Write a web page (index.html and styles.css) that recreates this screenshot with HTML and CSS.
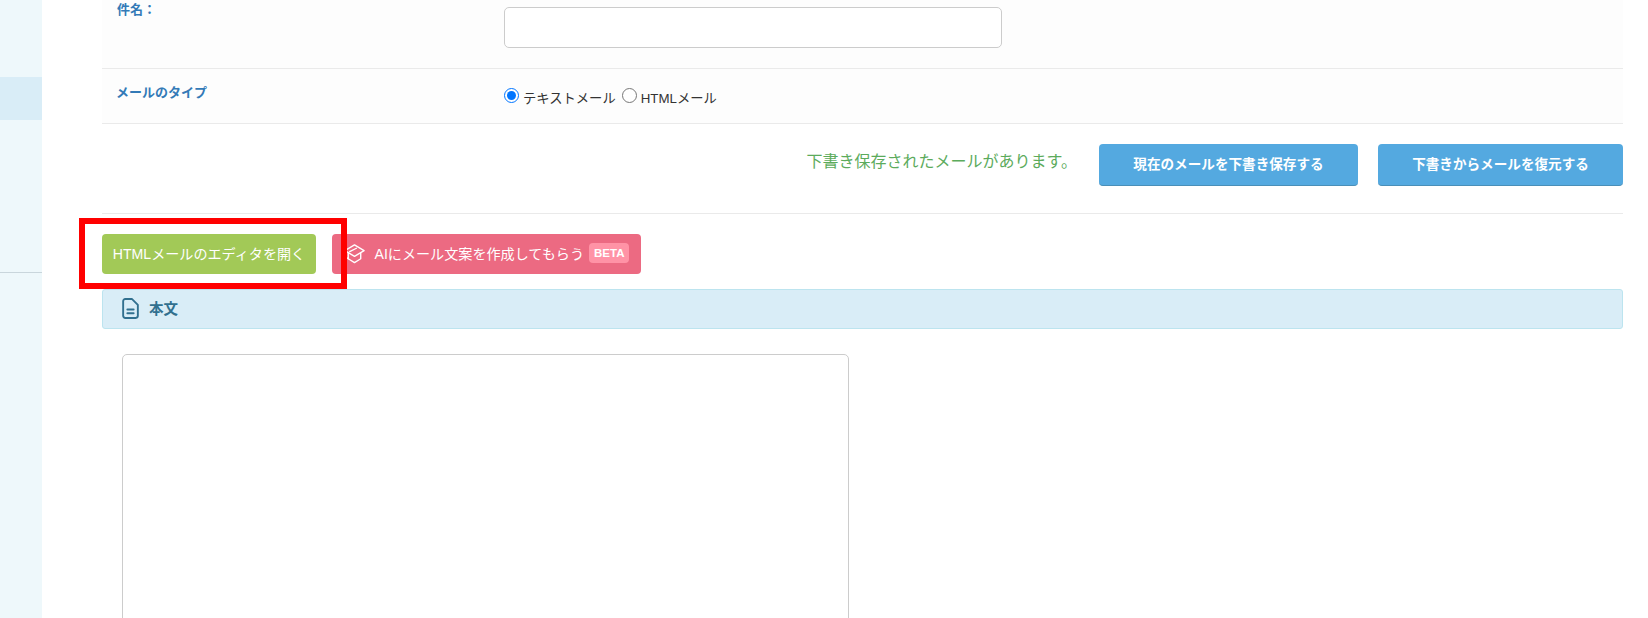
FILE: index.html
```html
<!DOCTYPE html>
<html lang="ja">
<head>
<meta charset="utf-8">
<title>メール作成</title>
<link rel="stylesheet" href="styles.css">
</head>
<body>
<div class="app">
  <aside class="sidebar">
    <div class="side-top"></div>
    <div class="side-active"></div>
    <div class="side-mid"></div>
  </aside>
  <main class="main">
    <div class="row row-subject">
      <div class="label">件名：</div>
      <div class="field"><input class="text-input" type="text"></div>
    </div>
    <div class="row row-type">
      <div class="label">メールのタイプ</div>
      <div class="field radios">
        <label class="radio"><input type="radio" name="t" checked><span class="radio-text">テキストメール</span></label>
        <label class="radio"><input type="radio" name="t"><span class="radio-text">HTMLメール</span></label>
      </div>
    </div>
    <div class="draft-bar">
      <span class="draft-note">下書き保存されたメールがあります。</span>
      <button class="btn-blue btn-save">現在のメールを下書き保存する</button>
      <button class="btn-blue btn-restore">下書きからメールを復元する</button>
    </div>
    <div class="tools">
      <div class="highlight"></div>
      <button class="btn btn-green">HTMLメールのエディタを開く</button>
      <button class="btn btn-pink">
        <svg class="cap" viewBox="0 0 24 24" fill="none" stroke="currentColor" stroke-width="1.4" stroke-linejoin="round" stroke-linecap="round">
          <path d="M12 3 22 9 12 15 2 9Z"/>
          <path d="M5.5 11.5V17.5L12 21.5 18.5 17.5V11.5"/>
          <path d="M2 9V15L5.5 17.5"/>
          <path d="M7 10 14 6.5"/>
        </svg>
        <span>AIにメール文案を作成してもらう</span>
        <span class="beta">BETA</span>
      </button>
    </div>
    <div class="section-head">
      <svg class="doc" viewBox="0 0 16 20" fill="none" stroke="currentColor" stroke-width="1.8" stroke-linejoin="round" stroke-linecap="round">
        <path d="M3 1H9.5L15 6.5V17A2 2 0 0 1 13 19H3A2 2 0 0 1 1 17V3A2 2 0 0 1 3 1Z"/>
        <path d="M5 11H11"/>
        <path d="M5 14.5H11"/>
      </svg>
      <span class="section-title">本文</span>
    </div>
    <div class="body-wrap"><textarea class="body-text"></textarea></div>
  </main>
</div>
</body>
</html>
```
FILE: styles.css
```css
* { box-sizing: border-box; }
html, body { margin: 0; height: 618px; overflow: hidden; background: #fff; }
body { font-family: "Liberation Sans", "Noto Sans CJK JP", sans-serif; font-size: 14px; color: #333; }
.app { display: flex; height: 618px; }
.sidebar { width: 42px; flex: none; background: #eef8fb; display: flex; flex-direction: column; }
.side-top { height: 77px; }
.side-active { height: 43px; background: #d9edf7; }
.side-mid { height: 153px; border-bottom: 1px solid #c9d6dc; }
.main { flex: 1; padding: 0 25px 0 60px; min-width: 0; overflow: hidden; height: 618px; }
.row { display: flex; background: #fdfdfd; border-bottom: 1px solid #eaeaea; }
.row-subject { height: 69px; }
.row-type { height: 55px; }
.label { width: 402px; flex: none; padding-left: 15px; color: #337ab7; font-weight: 700; font-size: 13px; line-height: 18px; }
.row-subject .label { padding-top: 1px; }
.row-type .label { padding-top: 15px; padding-left: 14px; width: 402px; }
.field { flex: 1; }
.text-input { display: block; width: 498px; height: 41px; margin-top: 7px; border: 1px solid #ccc; border-radius: 5px; background: #fff; }
.radios { display: flex; gap: 6px; padding-top: 19px; }
.radio { display: flex; align-items: flex-start; height: 20px; font-size: 13.3px; color: #333; }
.radio input { width: 15px; height: 15px; margin: 0 4px 0 0; }
.radio-text { line-height: 20px; margin-top: 1px; }
.draft-bar { display: flex; align-items: flex-start; justify-content: flex-end; height: 90px; border-bottom: 1px solid #eaeaea; padding-top: 20px; }
.draft-note { color: #5cab5c; font-size: 16px; line-height: 24px; margin: 6px 22px 0 0; }
.btn-blue { height: 42px; border: 0; border-bottom: 1px solid #4a8fb8; border-radius: 4px; background: #54a9e0; color: #fff; font: 700 13.6px "Noto Sans CJK JP", sans-serif; padding: 0 0 3px; }
.btn-save { width: 259px; margin-right: 20px; }
.btn-restore { width: 245px; }
.tools { position: relative; display: flex; gap: 16px; padding-top: 20px; height: 75px; }
.highlight { position: absolute; left: -23px; top: 4px; width: 268px; height: 71px; border: 6px solid #f00; pointer-events: none; z-index: 1; }
.btn { height: 40px; border: 0; border-radius: 4px; color: #fff; font: 400 14.1px "Liberation Sans", "Noto Sans CJK JP", sans-serif; padding: 0 0 2px; display: flex; align-items: center; justify-content: center; }
.btn-green { width: 214px; background: #a2c957; }
.btn-pink { width: 309px; background: #ec6a82; }
.cap { width: 23px; height: 23px; margin: 0 9px 0 -1px; }
.beta { display: inline-block; margin-left: 5px; padding: 0 5px; height: 20px; line-height: 20px; border-radius: 4px; background: #ff93a6; font-size: 11.5px; font-weight: 700; }
.section-head { display: flex; align-items: center; height: 40px; background: #d9edf7; border: 1px solid #bce4ef; border-radius: 3px; padding-left: 19px; color: #31708f; }
.section-title { font-weight: 700; font-size: 14.5px; margin-bottom: 4px; }
.doc { width: 17px; height: 21px; margin: 0 10px 2px 0; }
.body-wrap { padding: 25px 0 0 20px; }
.body-text { display: block; width: 727px; height: 300px; border: 1px solid #ccc; border-radius: 5px; background: #fff; resize: none; }
```
